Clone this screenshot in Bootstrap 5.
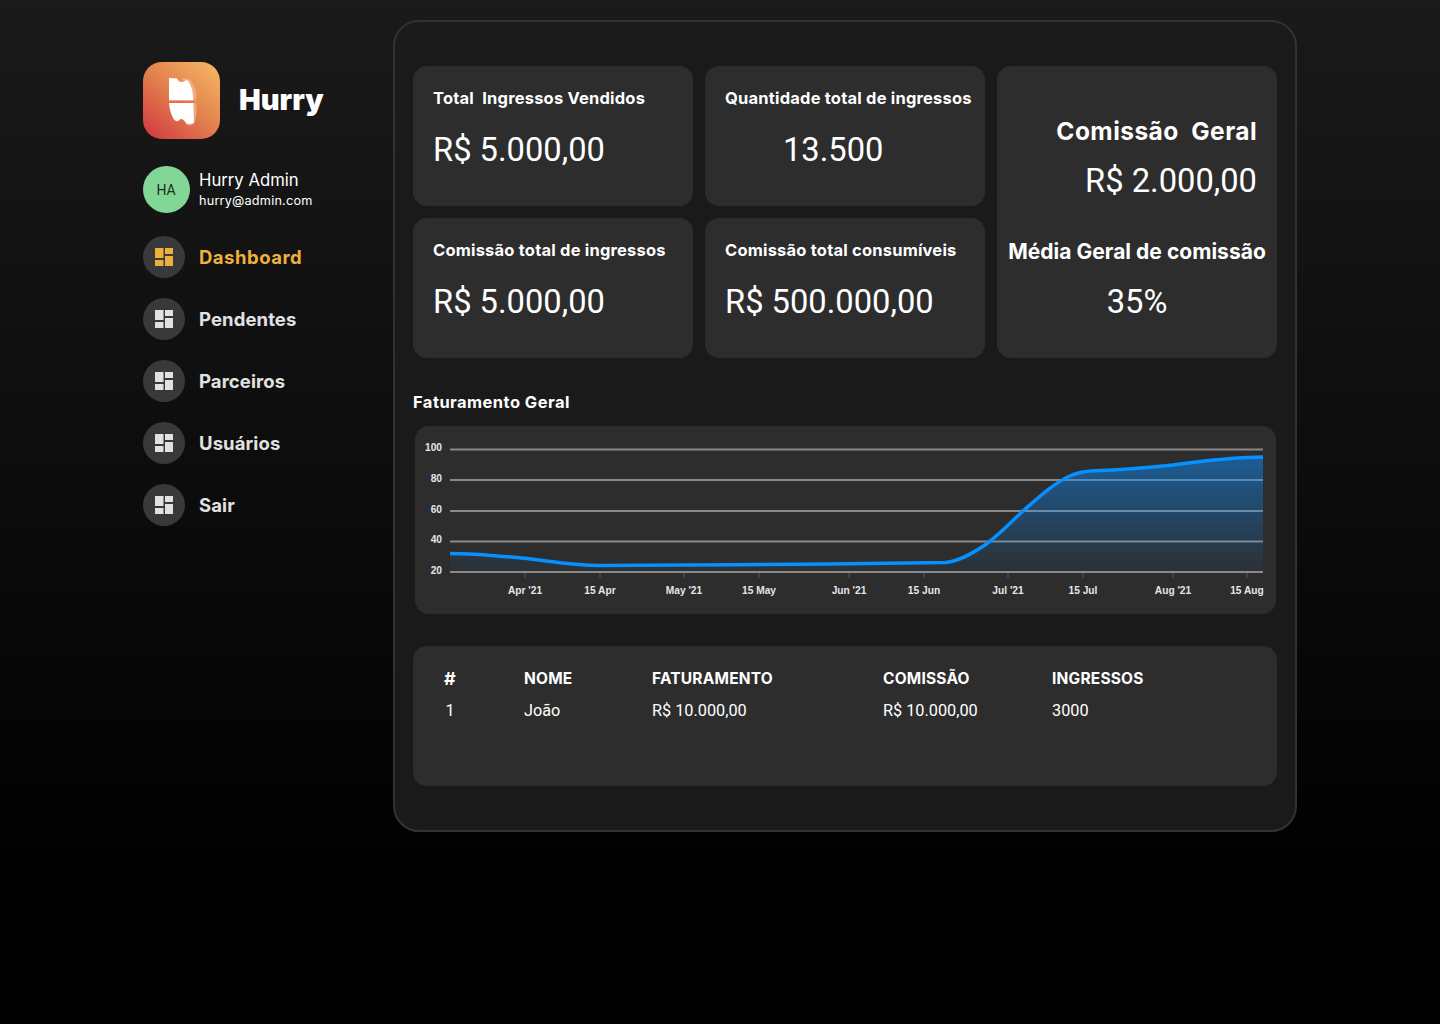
<!DOCTYPE html>
<html lang="pt-BR">

<head>
    <meta charset="UTF-8">
    <meta name="viewport" content="width=device-width, initial-scale=1.0">
    <title>Hurry Dashboard</title>
    <link href="https://cdn.jsdelivr.net/npm/bootstrap@5.3.0/dist/css/bootstrap.min.css" rel="stylesheet">
    <style>
        body {
            min-height: 1024px;
            background: linear-gradient(180deg, #1a1a1a 0, #000 900px);
            font-family: "Inter", "Noto Sans", sans-serif;
            color: #fff;
        }

        .page-wrap { padding: 20px 0 0 143px; }
        .side-col { width: 250px; padding-top: 42px; }
        .brand-logo { width: 77px; height: 77px; }
        .brand-name { font-size: 29px; font-weight: 900; margin: -2px 0 0 19px; }
        .user-row { margin-top: 27px; }
        .user-avatar {
            width: 47px; height: 47px; background: #83d796; color: #1c2a20; padding: 2px 1px 0 0;
            font-family: "Roboto", sans-serif; font-size: 14px; margin-right: 9px;
        }
        .user-name { font-size: 16.700px; line-height: 22px; }
        .user-mail { font-size: 12.700px; line-height: 20px; letter-spacing: .2px; }
        .side-nav { margin-top: 23px; gap: 20px; }
        .side-link { color: #e2e2e2; font-size: 18.500px; font-weight: 700; gap: 14px; text-decoration: none; letter-spacing: .1px; }
        .side-link.current { color: #edb03c; letter-spacing: .5px; }
        .side-label { padding-top: 2px; }
        .side-bubble { width: 42px; height: 42px; background: #393939; }
        .main-panel {
            width: 904px; height: 812px; padding: 44px 18px 0;
            background: #1a1a1a; border: 2px solid #323232; border-radius: 26px;
        }
        .stat-grid {
            display: grid; gap: 12px;
            grid-template-columns: repeat(3, 280px);
            grid-template-rows: repeat(2, 140px);
        }
        .stat-box { background: #2d2d2d; border-radius: 14px; }
        .stat-small { padding: 21px 0 0 20px; }
        .stat-title { font-size: 16.500px; font-weight: 700; line-height: 22px; white-space: nowrap; letter-spacing: .2px; }
        .stat-value { font-family: "Roboto", sans-serif; font-size: 32.700px; line-height: 40px; margin-top: 21px; }
        .stat-value.shifted { padding-left: 58px; }
        .stat-tall { grid-column: 3; grid-row: 1 / 3; padding-top: 50px; }
        .tall-head { font-size: 24.500px; font-weight: 700; line-height: 30px; text-align: right; padding-right: 20px; letter-spacing: .45px; }
        .tall-value { font-family: "Roboto", sans-serif; font-size: 32.700px; line-height: 40px; text-align: right; padding-right: 20px; margin-top: 15px; }
        .tall-sub { font-size: 21px; font-weight: 700; line-height: 28px; text-align: center; margin-top: 37px; white-space: nowrap; letter-spacing: .03px; }
        .tall-pct { font-family: "Roboto", sans-serif; font-size: 32.700px; line-height: 40px; text-align: center; margin-top: 16px; }
        .chart-title { font-size: 16.500px; font-weight: 700; line-height: 22px; margin: 33px 0 13px; letter-spacing: .45px; }
        .chart-box { background: #2d2d2d; border-radius: 14px; height: 188px; margin: 0 1px 0 2px; }
        .chart-box svg { display: block; }
        .grid-line { stroke: #8a8a8a; stroke-width: 2; }
        .axis-tick { stroke: #555b66; stroke-width: 1; }
        .axis-text { font-family: "Liberation Sans", sans-serif; font-size: 10.200px; font-weight: 700; fill: #e4e6ea; }
        .table-box { background: #2d2d2d; border-radius: 14px; height: 140px; margin-top: 32px; padding-top: 16px; }
        .sales-table { --bs-table-bg: transparent; --bs-table-color: #fff; table-layout: fixed; width: 864px; margin: 0; }
        .sales-table th, .sales-table td { padding: 0; height: 32px; vertical-align: middle; background: transparent; color: #fff; }
        .sales-table th { font-size: 15.500px; font-weight: 700; padding-top: 2px; letter-spacing: .2px; }
        .sales-table td { font-family: "Roboto", sans-serif; font-size: 16.300px; padding-top: 3px; }
        .sales-table .col-num { text-align: center; padding-right: 37px; }
        .sales-table th.col-num { font-size: 18px; padding-top: 0; }
    </style>
</head>

<body>
    <div class="page-wrap d-flex align-items-start">
        <div class="side-col">
            <div class="d-flex align-items-center">
                <svg class="brand-logo" viewBox="0 0 77 77">
                    <defs>
                        <linearGradient id="logoGrad" x1="0.1" y1="1" x2="0.95" y2="0">
                            <stop offset="0" stop-color="#d23c40"></stop>
                            <stop offset="0.5" stop-color="#e3814e"></stop>
                            <stop offset="1" stop-color="#f5b863"></stop>
                        </linearGradient>
                    </defs>
                    <rect width="77" height="77" rx="19" fill="url(#logoGrad)"></rect>
                    <path d="M38 16 46 17C50 20 52 26 53 30 54 33 53 37 53 38.500H49V28ZM51 41H53C54 46 54 53 52 59 51 62 49 64 46 63.500L42 62 50 58Z" fill="#f7c6a8" opacity=".55"></path>
                    <path d="M26 16 34 16.500C35 19 36.500 20 38.500 20 41 20 42.500 18.500 44 18 46 20 47.500 23 48.500 26 49.800 29 50 33 50 38.500H26Z" fill="#fff"></path>
                    <rect x="25.500" y="38.800" width="25.500" height="1.600" fill="#e36f40"></rect>
                    <path d="M26 41H50.500C50.500 47 51 54 51 61 48 62 46 62 43.700 61.700 42 60 41 57.500 38.700 57 36.500 57 35.500 59.500 33.700 59.300 31.500 58.500 30.500 57 30 56 28 52 26.500 47 26 41Z" fill="#fff"></path>
                </svg>
                <span class="brand-name">Hurry</span>
            </div>
            <div class="user-row d-flex align-items-center">
                <div class="user-avatar rounded-circle d-flex align-items-center justify-content-center flex-shrink-0">HA</div>
                <div>
                    <div class="user-name">Hurry Admin</div>
                    <div class="user-mail">hurry@admin.com</div>
                </div>
            </div>
            <nav class="side-nav d-flex flex-column">
                <a class="side-link current d-flex align-items-center" href="#">
                    <span class="side-bubble rounded-circle d-flex align-items-center justify-content-center">
                        <svg width="18" height="18" viewBox="0 0 18 18" fill="#edb03c"><rect width="8.500" height="10"></rect><rect y="12" width="8.500" height="6"></rect><rect x="10" width="8" height="6"></rect><rect x="10" y="8" width="8" height="10"></rect></svg>
                    </span><span class="side-label">Dashboard</span></a>
                <a class="side-link d-flex align-items-center" href="#">
                    <span class="side-bubble rounded-circle d-flex align-items-center justify-content-center">
                        <svg width="18" height="18" viewBox="0 0 18 18" fill="#e2e2e2"><rect width="8.500" height="10"></rect><rect y="12" width="8.500" height="6"></rect><rect x="10" width="8" height="6"></rect><rect x="10" y="8" width="8" height="10"></rect></svg>
                    </span><span class="side-label">Pendentes</span></a>
                <a class="side-link d-flex align-items-center" href="#">
                    <span class="side-bubble rounded-circle d-flex align-items-center justify-content-center">
                        <svg width="18" height="18" viewBox="0 0 18 18" fill="#e2e2e2"><rect width="8.500" height="10"></rect><rect y="12" width="8.500" height="6"></rect><rect x="10" width="8" height="6"></rect><rect x="10" y="8" width="8" height="10"></rect></svg>
                    </span><span class="side-label">Parceiros</span></a>
                <a class="side-link d-flex align-items-center" href="#">
                    <span class="side-bubble rounded-circle d-flex align-items-center justify-content-center">
                        <svg width="18" height="18" viewBox="0 0 18 18" fill="#e2e2e2"><rect width="8.500" height="10"></rect><rect y="12" width="8.500" height="6"></rect><rect x="10" width="8" height="6"></rect><rect x="10" y="8" width="8" height="10"></rect></svg>
                    </span><span class="side-label">Usuários</span></a>
                <a class="side-link d-flex align-items-center" href="#">
                    <span class="side-bubble rounded-circle d-flex align-items-center justify-content-center">
                        <svg width="18" height="18" viewBox="0 0 18 18" fill="#e2e2e2"><rect width="8.500" height="10"></rect><rect y="12" width="8.500" height="6"></rect><rect x="10" width="8" height="6"></rect><rect x="10" y="8" width="8" height="10"></rect></svg>
                    </span><span class="side-label">Sair</span></a>
            </nav>
        </div>

        <main class="main-panel">
            <div class="stat-grid">
                <div class="stat-box stat-small">
                    <div class="stat-title">Total&nbsp; Ingressos Vendidos</div>
                    <div class="stat-value">R$ 5.000,00</div>
                </div>
                <div class="stat-box stat-small">
                    <div class="stat-title">Quantidade total de ingressos</div>
                    <div class="stat-value shifted">13.500</div>
                </div>
                <div class="stat-box stat-tall">
                    <div class="tall-head">Comissão&nbsp; Geral</div>
                    <div class="tall-value">R$ 2.000,00</div>
                    <div class="tall-sub">Média Geral de comissão</div>
                    <div class="tall-pct">35%</div>
                </div>
                <div class="stat-box stat-small">
                    <div class="stat-title">Comissão total de ingressos</div>
                    <div class="stat-value">R$ 5.000,00</div>
                </div>
                <div class="stat-box stat-small">
                    <div class="stat-title">Comissão total consumíveis</div>
                    <div class="stat-value">R$ 500.000,00</div>
                </div>
            </div>

            <div class="chart-title">Faturamento Geral</div>
            <div class="chart-box">
                <svg width="861" height="188" viewBox="415 426 861 188">
                    <defs>
                        <linearGradient id="areaGrad" x1="0" y1="0" x2="0" y2="1">
                            <stop offset="0" stop-color="#0a8dff" stop-opacity=".5"></stop>
                            <stop offset="1" stop-color="#0a8dff" stop-opacity=".03"></stop>
                        </linearGradient>
                    </defs>
                    <line class="grid-line" x1="450" x2="1263" y1="449.500" y2="449.500"></line>
                    <line class="grid-line" x1="450" x2="1263" y1="480" y2="480"></line>
                    <line class="grid-line" x1="450" x2="1263" y1="511" y2="511"></line>
                    <line class="grid-line" x1="450" x2="1263" y1="541.500" y2="541.500"></line>
                    <line class="grid-line" x1="450" x2="1263" y1="572" y2="572"></line>
                    <path class="axis-tick" d="M525 573v5M600 573v5M684 573v5M759 573v5M849 573v5M924 573v5M1008 573v5M1083 573v5M1173 573v5M1247 573v5"></path>
                    <path d="M450 553.500C475 553.500 500 556 527 558.500C550 561 570 565.500 600 565.500C640 565.700 700 565 757 564.500C820 564 880 563.500 945 562.500C958 561.500 970 555 985 545C1000 534 1012 521 1023 511C1038 498 1055 482 1072 475C1080 472 1086 471 1095 470.800C1120 470 1145 468 1173 465C1200 461.500 1230 457 1263 457V572H450Z" fill="url(#areaGrad)"></path>
                    <path d="M450 553.500C475 553.500 500 556 527 558.500C550 561 570 565.500 600 565.500C640 565.700 700 565 757 564.500C820 564 880 563.500 945 562.500C958 561.500 970 555 985 545C1000 534 1012 521 1023 511C1038 498 1055 482 1072 475C1080 472 1086 471 1095 470.800C1120 470 1145 468 1173 465C1200 461.500 1230 457 1263 457" fill="none" stroke="#0790ff" stroke-width="3.500"></path>
                    <g class="axis-text" text-anchor="end">
                        <text x="442" y="451">100</text>
                        <text x="442" y="482">80</text>
                        <text x="442" y="513">60</text>
                        <text x="442" y="543">40</text>
                        <text x="442" y="574">20</text>
                    </g>
                    <g class="axis-text" text-anchor="middle">
                        <text x="525" y="594">Apr '21</text>
                        <text x="600" y="594">15 Apr</text>
                        <text x="684" y="594">May '21</text>
                        <text x="759" y="594">15 May</text>
                        <text x="849" y="594">Jun '21</text>
                        <text x="924" y="594">15 Jun</text>
                        <text x="1008" y="594">Jul '21</text>
                        <text x="1083" y="594">15 Jul</text>
                        <text x="1173" y="594">Aug '21</text>
                        <text x="1247" y="594">15 Aug</text>
                    </g>
                </svg>
            </div>

            <div class="table-box">
                <table class="table table-borderless sales-table">
                    <colgroup>
                        <col style="width: 111px">
                        <col style="width: 128px">
                        <col style="width: 231px">
                        <col style="width: 169px">
                        <col>
                    </colgroup>
                    <thead>
                        <tr>
                            <th class="col-num">#</th>
                            <th>NOME</th>
                            <th>FATURAMENTO</th>
                            <th>COMISSÃO</th>
                            <th>INGRESSOS</th>
                        </tr>
                    </thead>
                    <tbody>
                        <tr>
                            <td class="col-num">1</td>
                            <td>João</td>
                            <td>R$ 10.000,00</td>
                            <td>R$ 10.000,00</td>
                            <td>3000</td>
                        </tr>
                    </tbody>
                </table>
            </div>
        </main>
    </div>

    <script src="https://cdn.jsdelivr.net/npm/bootstrap@5.3.0/dist/js/bootstrap.bundle.min.js"></script>
</body>

</html>
